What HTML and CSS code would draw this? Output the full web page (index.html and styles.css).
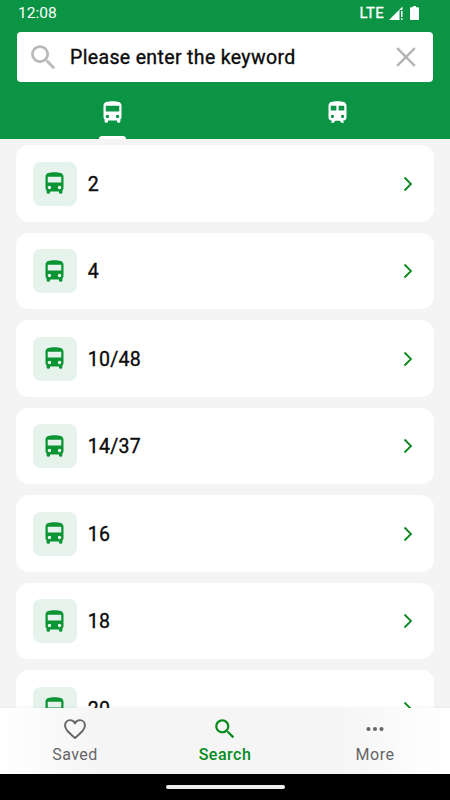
FILE: index.html
```html
<!DOCTYPE html>
<html lang="en">
<head>
    <meta charset="UTF-8">
    <meta name="viewport" content="width=device-width, initial-scale=1.0">
    <title>Search</title>
    <link rel="stylesheet" href="styles.css">
</head>
<body>
    <!-- Shared icons -->
    <svg class="sprite">
        <symbol id="bus" viewBox="0 0 24 24">
            <path d="M4 16c0 .88.39 1.67 1 2.22V20c0 .55.45 1 1 1h1c.55 0 1-.45 1-1v-1h8v1c0 .55.45 1 1 1h1c.55 0 1-.45 1-1v-1.78c.61-.55 1-1.34 1-2.22V6c0-3.5-3.58-4-8-4s-8 .5-8 4v10zm3.5 1c-.83 0-1.5-.67-1.5-1.5S6.67 14 7.5 14s1.500.67 1.500 1.500S8.330 17 7.500 17zm9 0c-.83 0-1.500-.67-1.500-1.500s.67-1.500 1.500-1.500 1.500.67 1.500 1.500-.67 1.500-1.500 1.500zm1.500-6H6V6h12v5z"/>
        </symbol>
        <symbol id="train" viewBox="0 0 24 24">
            <path fill-rule="evenodd" d="M12 2c-4.420 0-8 .5-8 4v10.200C4 18 5.300 19.200 7.300 19.400L6 21h2.500l1.500-1.600h4l1.500 1.600H18l-1.300-1.600c2-.2 3.300-1.400 3.300-3.200V6c0-3.500-3.580-4-8-4zM6 6h5v4.200H6zM13 6h5v4.200h-5zM7.500 14.100a1.400 1.400 0 1 0 0 2.800 1.400 1.400 0 0 0 0-2.800zM16.500 14.100a1.400 1.400 0 1 0 0 2.800 1.400 1.400 0 0 0 0-2.800z"/>
        </symbol>
        <symbol id="search" viewBox="0 0 24 24">
            <path d="M15.500 14h-.79l-.28-.27C15.410 12.590 16 11.110 16 9.500 16 5.910 13.090 3 9.500 3S3 5.910 3 9.500 5.910 16 9.500 16c1.610 0 3.090-.59 4.230-1.570l.27.28v.79l5 4.990L20.490 19l-4.990-5zm-6 0C7.010 14 5 11.990 5 9.500S7.010 5 9.500 5 14 7.010 14 9.500 11.990 14 9.500 14z"/>
        </symbol>
        <symbol id="chevron" viewBox="0 0 10 16">
            <path d="M1.500 1.500L8 8l-6.500 6.500" fill="none" stroke="currentColor" stroke-width="1.800"/>
        </symbol>
    </svg>

    <header class="header">
        <div class="status">
            <span class="time">12:08</span>
            <span class="network">LTE</span>
            <svg class="signal" viewBox="0 0 14 14">
                <path d="M0 14L13.500 .5V4H10.500v10z"/>
                <path d="M12 5h1.500v6H12zM12 12.300h1.500V14H12z"/>
            </svg>
            <svg class="battery" viewBox="0 0 9 14"><path d="M1 1.300h2V0h3v1.300h2q1 0 1 1V13q0 1-1 1H1q-1 0-1-1V2.300q0-1 1-1z"/></svg>
        </div>
        <div class="search-box">
            <svg class="search-icon"><use href="#search"/></svg>
            <span class="search-text">Please enter the keyword</span>
            <svg class="clear" viewBox="0 0 20 20"><path d="M1.200 1.200l17.600 17.600M18.800 1.200L1.200 18.800"/></svg>
        </div>
        <div class="tabs">
            <div class="tab active"><svg class="tab-icon"><use href="#bus"/></svg></div>
            <div class="tab"><svg class="tab-icon"><use href="#train"/></svg></div>
        </div>
    </header>

    <main class="list">
        <div class="card">
            <div class="tile"><svg class="bus"><use href="#bus"/></svg></div>
            <span class="route">2</span>
            <svg class="chevron"><use href="#chevron"/></svg>
        </div>
        <div class="card">
            <div class="tile"><svg class="bus"><use href="#bus"/></svg></div>
            <span class="route">4</span>
            <svg class="chevron"><use href="#chevron"/></svg>
        </div>
        <div class="card">
            <div class="tile"><svg class="bus"><use href="#bus"/></svg></div>
            <span class="route">10/48</span>
            <svg class="chevron"><use href="#chevron"/></svg>
        </div>
        <div class="card">
            <div class="tile"><svg class="bus"><use href="#bus"/></svg></div>
            <span class="route">14/37</span>
            <svg class="chevron"><use href="#chevron"/></svg>
        </div>
        <div class="card">
            <div class="tile"><svg class="bus"><use href="#bus"/></svg></div>
            <span class="route">16</span>
            <svg class="chevron"><use href="#chevron"/></svg>
        </div>
        <div class="card">
            <div class="tile"><svg class="bus"><use href="#bus"/></svg></div>
            <span class="route">18</span>
            <svg class="chevron"><use href="#chevron"/></svg>
        </div>
        <div class="card">
            <div class="tile"><svg class="bus"><use href="#bus"/></svg></div>
            <span class="route">20</span>
            <svg class="chevron"><use href="#chevron"/></svg>
        </div>
    </main>

    <nav class="nav">
        <div class="nav-item">
            <svg class="nav-icon" viewBox="0 0 24 24"><path class="heart" d="M12 20.300C5.800 14.800 2.800 12.200 2.800 8.600 2.800 5.900 4.900 3.800 7.500 3.800c1.900 0 3.700 1 4.500 2.900.8-1.900 2.600-2.900 4.500-2.900 2.600 0 4.700 2.100 4.700 4.800 0 3.600-3 6.200-9.200 11.700z"/></svg>
            <span class="nav-label">Saved</span>
        </div>
        <div class="nav-item selected">
            <svg class="nav-icon"><use href="#search"/></svg>
            <span class="nav-label">Search</span>
        </div>
        <div class="nav-item">
            <svg class="nav-icon" viewBox="0 0 24 24"><circle cx="6" cy="12" r="1.900"/><circle cx="12" cy="12" r="1.900"/><circle cx="18" cy="12" r="1.900"/></svg>
            <span class="nav-label">More</span>
        </div>
    </nav>
    <div class="gesture"><div class="handle"></div></div>
</body>
</html>
```
FILE: styles.css
```css
* {
    box-sizing: border-box;
}
body {
    margin: 0;
    height: 800px;
    display: flex;
    flex-direction: column;
    overflow: hidden;
    font-family: Roboto, sans-serif;
    background: #f4f4f4;
    color: #0b0b0b;
}
svg {
    display: block;
    flex: none;
    fill: currentColor;
}
.sprite {
    display: none;
}
.header {
    flex: none;
    height: 139.4px;
    display: flex;
    flex-direction: column;
    background: #0b9444;
    color: #fff;
}
.status {
    height: 32px;
    padding: 0 31px 6px 18px;
    display: flex;
    align-items: center;
}
.time {
    flex: 1;
    font-size: 15.5px;
}
.network {
    font-size: 15px;
    letter-spacing: 0.3px;
    margin-right: 5px;
    -webkit-text-stroke: 0.3px;
}
.signal {
    width: 14px;
    height: 14px;
    margin-right: 7px;
}
.battery {
    width: 9px;
    height: 14px;
}
.search-box {
    height: 50px;
    margin: 0 17px;
    padding: 0 17px 0 10px;
    display: flex;
    align-items: center;
    background: #fff;
    border-radius: 4px;
}
.search-icon {
    width: 33px;
    height: 33px;
    color: #bababa;
}
.search-text {
    flex: 1;
    margin-left: 10px;
    font-size: 19.5px;
    letter-spacing: 0.35px;
    color: #0b0b0b;
    -webkit-text-stroke: 0.35px;
}
.clear {
    width: 20px;
    height: 20px;
    fill: none;
    stroke: #b5b5b5;
    stroke-width: 2.5;
}
.tabs {
    flex: 1;
    display: flex;
}
.tab {
    flex: 1;
    display: flex;
    flex-direction: column;
    align-items: center;
    justify-content: space-between;
    padding-top: 17px;
}
.tab-icon {
    width: 27px;
    height: 27px;
}
.active::after {
    content: "";
    width: 27px;
    height: 3px;
    border-radius: 3px 3px 0 0;
    background: #fff;
}
.list {
    flex: 1;
    min-height: 0;
    overflow: hidden;
    padding: 6px 16.4px 0;
    display: flex;
    flex-direction: column;
    gap: 11px;
}
.card {
    flex: none;
    height: 76.5px;
    padding: 0 20.3px 0 16.3px;
    display: flex;
    align-items: center;
    background: #fff;
    border-radius: 13px;
}
.tile {
    width: 44px;
    height: 44px;
    display: flex;
    align-items: center;
    justify-content: center;
    background: #e6f3ec;
    border-radius: 8px;
}
.bus {
    width: 27px;
    height: 27px;
    color: #0b9434;
}
.route {
    flex: 1;
    margin-left: 11px;
    padding-top: 1px;
    font-size: 19.5px;
    letter-spacing: 0.3px;
    -webkit-text-stroke: 0.35px;
}
.chevron {
    width: 10px;
    height: 16px;
    color: #0a8a1c;
}
.nav {
    flex: none;
    height: 66px;
    display: flex;
    background: linear-gradient(to right, #fff, #f5f5f5 22%, #f5f5f5 75%, #fff);
    box-shadow: 0 0 3px rgba(0, 0, 0, 0.08);
    z-index: 1;
}
.nav-item {
    flex: 1;
    display: flex;
    flex-direction: column;
    align-items: center;
    padding-top: 8px;
    color: #666;
}
.nav-icon {
    width: 26px;
    height: 26px;
}
.heart {
    fill: none;
    stroke: currentColor;
    stroke-width: 1.8;
    stroke-linejoin: round;
}
.nav-label {
    margin-top: 3px;
    font-size: 16px;
    line-height: 19px;
    letter-spacing: 0.5px;
}
.selected {
    color: #058a1c;
}
.selected .nav-label {
    font-weight: 500;
}
.gesture {
    flex: none;
    height: 26px;
    display: flex;
    align-items: center;
    justify-content: center;
    background: #000;
}
.handle {
    width: 119px;
    height: 4px;
    border-radius: 2px;
    background: #eee;
}
```
